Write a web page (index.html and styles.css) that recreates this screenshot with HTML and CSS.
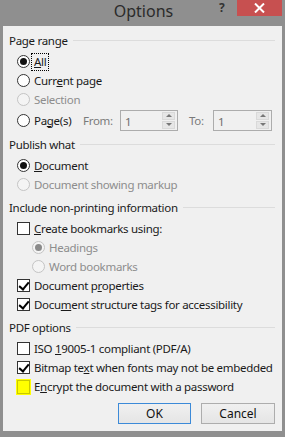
FILE: index.html
```html
<!DOCTYPE html>
<html lang="en">
<head>
    <meta charset="UTF-8">
    <title>Options</title>
    <link rel="stylesheet" href="styles.css">
</head>
<body>
    <div class="window">
        <div class="titlebar">
            <span class="title">Options</span>
            <span class="help">?</span>
            <span class="close">
                <svg width="11" height="10" viewBox="0 0 11 10"><path d="M1 0.5 L10 9.5 M10 0.5 L1 9.5" stroke="#fff" stroke-width="2"/></svg>
            </span>
        </div>

        <div class="dialog">
            <div class="group">
                <div class="group-title"><span>Page range</span></div>
                <div class="row"><span class="radio on"></span><span class="label focus"><u>A</u>ll</span></div>
                <div class="row"><span class="radio"></span><span class="label">Curr<u>e</u>nt page</span></div>
                <div class="row disabled"><span class="radio"></span><span class="label">Selection</span></div>
                <div class="row pages">
                    <span class="radio"></span><span class="label">Pa<u>g</u>e(s)</span>
                    <span class="range-label from">From:</span>
                    <span class="spin"><span class="spin-value">1</span><span class="spin-btns"><i class="up"></i><i class="down"></i></span></span>
                    <span class="range-label to">To:</span>
                    <span class="spin"><span class="spin-value">1</span><span class="spin-btns"><i class="up"></i><i class="down"></i></span></span>
                </div>
            </div>

            <div class="group">
                <div class="group-title"><span>Publish what</span></div>
                <div class="row"><span class="radio on"></span><span class="label"><u>D</u>ocument</span></div>
                <div class="row disabled"><span class="radio"></span><span class="label">Document showing markup</span></div>
            </div>

            <div class="group">
                <div class="group-title"><span>Include non-printing information</span></div>
                <div class="row"><span class="check"></span><span class="label"><u>C</u>reate bookmarks using:</span></div>
                <div class="row sub disabled"><span class="radio on"></span><span class="label">Headings</span></div>
                <div class="row sub disabled"><span class="radio"></span><span class="label">Word bookmarks</span></div>
                <div class="row"><span class="check on"></span><span class="label">Document p<u>r</u>operties</span></div>
                <div class="row"><span class="check on"></span><span class="label">Docu<u>m</u>ent structure tags for accessibility</span></div>
            </div>

            <div class="group">
                <div class="group-title"><span>PDF options</span></div>
                <div class="row"><span class="check"></span><span class="label">ISO <u>1</u>9005-1 compliant (PDF/A)</span></div>
                <div class="row"><span class="check on"></span><span class="label">Bitmap te<u>x</u>t when fonts may not be embedded</span></div>
                <div class="row"><span class="check marked"></span><span class="label">E<u>n</u>crypt the document with a password</span></div>
            </div>

            <div class="buttons">
                <button class="default">OK</button>
                <button>Cancel</button>
            </div>
        </div>
    </div>
</body>
</html>
```

FILE: styles.css
```css
:root {
    --frame: #8f8f8f;
    --face: #f0f0f0;
    --text: #1a1a1a;
    --text-disabled: #8d8d8d;
    --line: #dcdcdc;
    --control: #333;
}

* {
    margin: 0;
    padding: 0;
    box-sizing: border-box;
}

body {
    background: var(--frame);
    font-family: "Noto Sans", "Open Sans", sans-serif;
    font-size: 11.5px;
    letter-spacing: -0.3px;
    color: var(--text);
    width: 285px;
    height: 437px;
    overflow: hidden;
}

.titlebar {
    height: 26px;
    display: flex;
    justify-content: center;
    position: relative;
}

.title {
    font-size: 16px;
    letter-spacing: 0;
    line-height: 22px;
    color: #2b2b2b;
    padding-left: 2px;
}

.help {
    position: absolute;
    left: 219px;
    top: 0;
    font-size: 12px;
    line-height: 16px;
    font-weight: 700;
    color: #333;
}

.close {
    position: absolute;
    left: 237px;
    top: 0;
    width: 45px;
    height: 16px;
    background: #c75050;
    display: flex;
    align-items: center;
    justify-content: center;
}

.dialog {
    background: var(--face);
    margin: 0 3px;
    height: 405px;
    padding: 4px 7px 7px 6px;
}

.group {
    margin-bottom: 3px;
}

.group-title {
    height: 20px;
    display: flex;
    align-items: center;
    margin-bottom: 2px;
}

.group-title span {
    padding-right: 5px;
    white-space: nowrap;
}

.group-title::after {
    content: "";
    flex: 1;
    border-top: 1px solid var(--line);
    margin-top: 1px;
}

.row {
    height: 19px;
    display: flex;
    align-items: center;
    padding-left: 8px;
    white-space: nowrap;
}

.row.sub {
    padding-left: 23px;
}

.row.disabled {
    color: var(--text-disabled);
}

.radio {
    width: 13px;
    height: 13px;
    border: 1px solid var(--control);
    border-radius: 50%;
    background: #fff;
    margin-right: 4px;
    display: flex;
    align-items: center;
    justify-content: center;
    flex: none;
}

.radio.on::after {
    content: "";
    width: 7px;
    height: 7px;
    border-radius: 50%;
    background: #111;
}

.disabled .radio {
    border-color: #c4c4c4;
    background: #f4f4f4;
}

.disabled .radio.on::after {
    background: #8a8a8a;
}

.check {
    width: 13px;
    height: 13px;
    border: 1px solid var(--control);
    background: #fff;
    margin-right: 4px;
    position: relative;
    flex: none;
}

.check.on::after {
    content: "";
    position: absolute;
    left: 3px;
    top: 0px;
    width: 4px;
    height: 8px;
    border: solid #000;
    border-width: 0 2px 2px 0;
    transform: rotate(40deg);
}

.check.marked {
    background: #ffff00;
    border-color: #c9c900;
    box-shadow: 0 0 0 1px #ffff00;
    height: 14px;
}

.focus {
    outline: 1px dotted #000;
    outline-offset: 0;
    padding: 0 2px;
    margin-left: -2px;
    line-height: 16px;
}

.row.pages {
    height: 22px;
}

.pages .label {
    width: 36px;
    flex: none;
}

.range-label {
    color: #7a7a7a;
    flex: none;
}

.range-label.from {
    width: 28px;
    margin-left: 13px;
}

.range-label.to {
    width: 16px;
    margin-left: 11px;
}

.spin {
    height: 21px;
    width: 58px;
    flex: none;
    border: 1px solid #acacac;
    background: #f0f0f0;
    display: flex;
    margin-left: 9px;
}

.spin + .range-label + .spin {
    margin-left: 8px;
    width: 59px;
}

.spin-value {
    flex: 1;
    color: #6d6d6d;
    padding: 3px 0 0 4px;
    line-height: 16px;
}

.spin-btns {
    width: 13px;
    margin: 1px 2px 1px 0;
    display: flex;
    flex-direction: column;
    gap: 1px;
}

.spin-btns i {
    flex: 1;
    background: #e6e6e6;
    border: 1px solid #d9d9d9;
    display: flex;
    align-items: center;
    justify-content: center;
}

.spin-btns i::after {
    content: "";
    border-left: 3px solid transparent;
    border-right: 3px solid transparent;
}

.spin-btns .up::after {
    border-bottom: 3px solid #777;
}

.spin-btns .down::after {
    border-top: 3px solid #777;
}

.buttons {
    display: flex;
    justify-content: flex-end;
    gap: 10px;
    margin-top: 7px;
}

button {
    font-family: inherit;
    font-size: 12px;
    color: #111;
    width: 74px;
    height: 21px;
    border: 1px solid #adadad;
    background: linear-gradient(#f0f0f0, #e5e5e5);
}

button.default {
    width: 73px;
    border-color: #3c8ad8;
}
```
